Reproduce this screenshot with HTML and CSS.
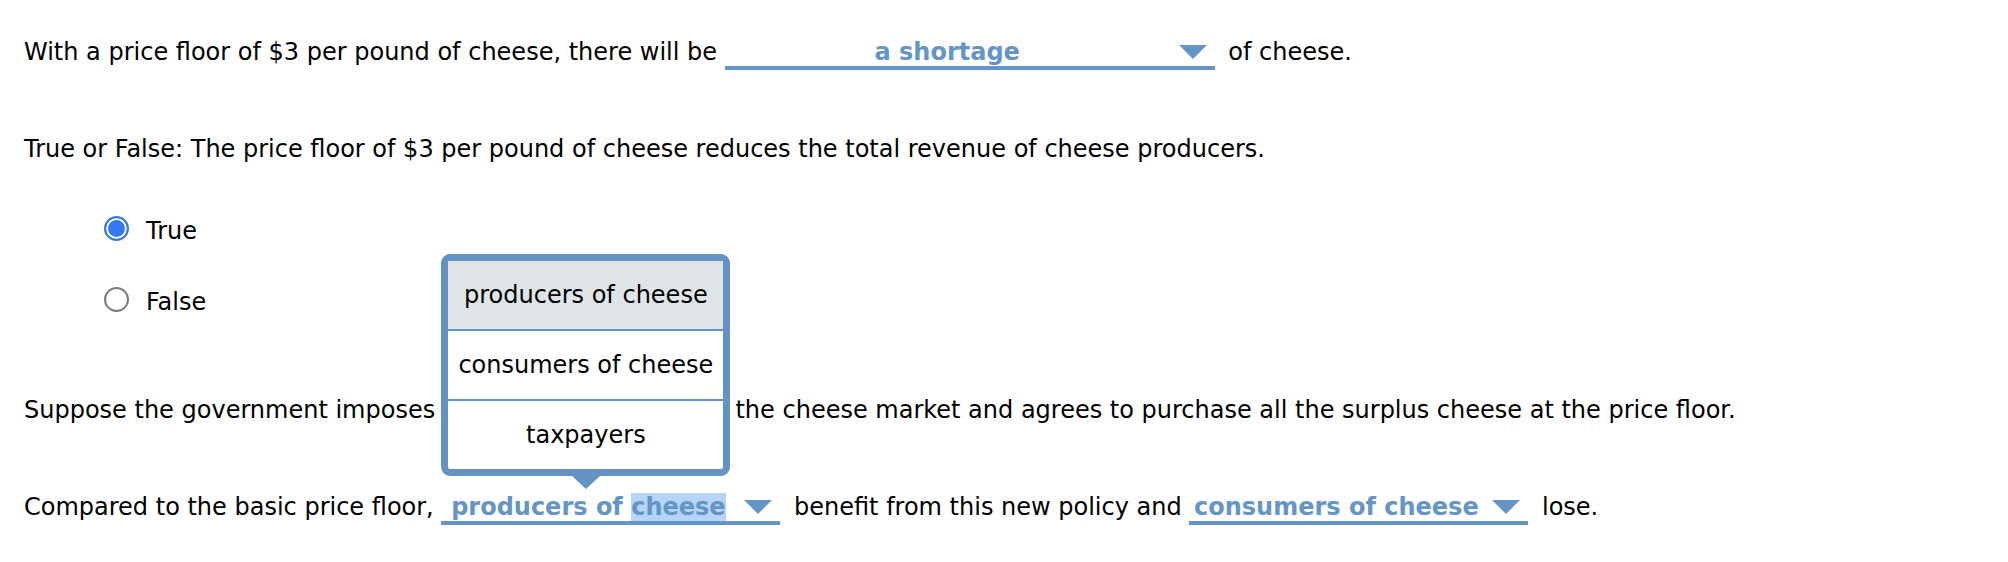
FILE: index.html
```html
<!DOCTYPE html>
<html lang="en">
<head>
<meta charset="utf-8">
<title>Price floor question</title>
<link rel="stylesheet" href="styles.css">
</head>
<body>
<main class="page">
  <p class="line q1">With a price floor of $3 per pound of cheese, there will be <span class="dd dd-wide"><span class="dd-text">a shortage</span><span class="dd-arrow"></span></span> of cheese.</p>

  <p class="line q2">True or False: The price floor of $3 per pound of cheese reduces the total revenue of cheese producers.</p>

  <div class="options">
    <label class="option"><input type="radio" name="tf" class="radio" checked><span>True</span></label>
    <label class="option"><input type="radio" name="tf" class="radio"><span>False</span></label>
  </div>

  <p class="line q3">Suppose the government imposes <span class="covered">a price floor in</span> the cheese market and agrees to purchase all the surplus cheese at the price floor.</p>

  <p class="line q4">Compared to the basic price floor, <span class="dd dd-mid"><span class="dd-text">producers of <span class="sel">cheese</span></span><span class="dd-arrow"></span><span class="popup">
        <span class="popup-item active">producers of cheese</span>
        <span class="popup-item">consumers of cheese</span>
        <span class="popup-item">taxpayers</span>
      </span></span> benefit from this new policy and <span class="dd dd-mid"><span class="dd-text">consumers of cheese</span><span class="dd-arrow"></span></span> lose.</p>
</main>
</body>
</html>
```

FILE: styles.css
```css
html, body {
  margin: 0;
  padding: 0;
  background: #ffffff;
}

body {
  font-family: "DejaVu Sans", Verdana, sans-serif;
  font-size: 24px;
  color: #000000;
}

.page {
  padding: 34px 0 0 24px;
}

.line {
  margin: 0;
  line-height: 36px;
  white-space: nowrap;
}

.q1 { margin-bottom: 61px; }
.q2 { margin-bottom: 46px; }
.q3 { margin-bottom: 61px; }

.options {
  display: flex;
  flex-direction: column;
  gap: 35px;
  margin: 0 0 72px 80px;
}

.option {
  display: flex;
  align-items: center;
  gap: 17px;
  height: 36px;
  line-height: 36px;
}

.radio {
  -webkit-appearance: none;
  appearance: none;
  box-sizing: border-box;
  width: 25px;
  height: 25px;
  margin: 0 0 5px 0;
  border-radius: 50%;
  border: 2px solid #7b7b7b;
  background: #ffffff;
}

.radio:checked {
  border-color: #3478f6;
  background: #3478f6;
  box-shadow: inset 0 0 0 2px #ffffff;
}

/* dropdowns */
.dd {
  display: inline-flex;
  align-items: flex-end;
  position: relative;
  box-sizing: border-box;
  line-height: 27px;
  border-bottom: 4px solid #6495c6;
  color: #6495c6;
  font-weight: bold;
  margin: 0 6px 0 0;
}

.dd-wide { width: 490px; }
.dd-mid { width: 339px; }

.dd-text {
  flex: 1;
  text-align: center;
  white-space: nowrap;
}

.dd-arrow {
  width: 0;
  height: 0;
  border-left: 14px solid transparent;
  border-right: 14px solid transparent;
  border-top: 14px solid #6495c6;
  margin: 0 8px 7px 9px;
}

.sel {
  background: #b6d4fa;
}

.covered {
  display: inline-block;
  width: 285px;
  overflow: hidden;
  text-align: center;
  vertical-align: bottom;
}

/* open dropdown menu */
.popup {
  position: absolute;
  left: 0;
  bottom: calc(100% + 18px);
  z-index: 10;
  display: flex;
  flex-direction: column;
  width: max-content;
  border: 7px solid #6493c3;
  border-radius: 9px;
  background: #ffffff;
  color: #000000;
  font-weight: normal;
}

.popup::after {
  content: "";
  position: absolute;
  top: calc(100% + 7px);
  left: 50%;
  transform: translateX(-50%);
  width: 0;
  height: 0;
  border-left: 14px solid transparent;
  border-right: 14px solid transparent;
  border-top: 13px solid #6493c3;
}

.popup-item {
  display: block;
  height: 68px;
  line-height: 68px;
  padding: 0 10px;
  text-align: center;
}

.popup-item + .popup-item {
  border-top: 2px solid #6493c3;
}

.popup-item.active {
  background: #dfe5e7;
}
```
